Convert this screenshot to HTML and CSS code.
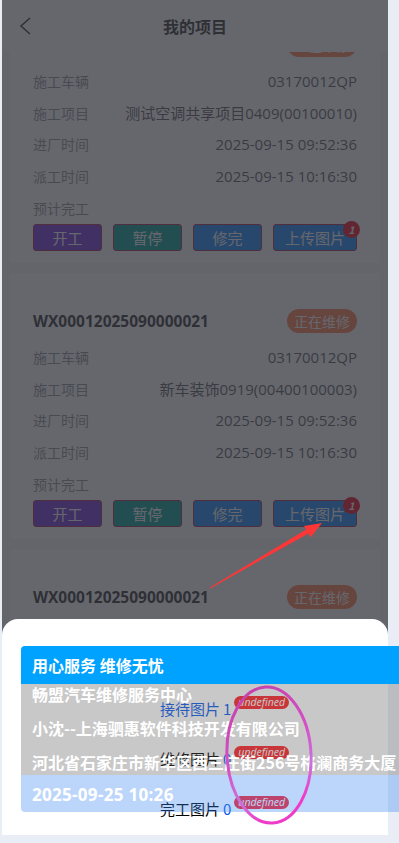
FILE: index.html
```html
<!DOCTYPE html>
<html lang="zh-CN">
<head>
<meta charset="UTF-8" />
<meta name="viewport" content="width=device-width, initial-scale=1" />
<title>我的项目</title>
<link rel="stylesheet" href="styles.css">
</head>
<body>
  <div class="app">
    <div class="nav">
      <span class="nav-back">
        <svg viewBox="0 0 12 18" aria-hidden="true"><polyline points="11,1 2,9 11,17" /></svg>
      </span>
      <div class="nav-title">我的项目</div>
      <span></span>
    </div>

    <div class="list">
      <div class="list-inner">
        <div class="card">
          <div class="card-head">
            <div class="card-no">WX00012025090000020</div>
            <span class="status">正在维修</span>
          </div>
          <div class="rows">
            <div class="row"><span class="label">施工车辆</span><span class="value">03170012QP</span></div>
            <div class="row"><span class="label">施工项目</span><span class="value">测试空调共享项目0409(00100010)</span></div>
            <div class="row"><span class="label">进厂时间</span><span class="value">2025-09-15 09:52:36</span></div>
            <div class="row"><span class="label">派工时间</span><span class="value">2025-09-15 10:16:30</span></div>
            <div class="row"><span class="label">预计完工</span><span class="value"></span></div>
          </div>
          <div class="actions">
            <button class="btn btn-start">开工</button>
            <button class="btn btn-pause">暂停</button>
            <button class="btn btn-done">修完</button>
            <button class="btn btn-upload">上传图片<span class="dot">1</span></button>
          </div>
        </div>

        <div class="card">
          <div class="card-head">
            <div class="card-no">WX00012025090000021</div>
            <span class="status">正在维修</span>
          </div>
          <div class="rows">
            <div class="row"><span class="label">施工车辆</span><span class="value">03170012QP</span></div>
            <div class="row"><span class="label">施工项目</span><span class="value">新车装饰0919(00400100003)</span></div>
            <div class="row"><span class="label">进厂时间</span><span class="value">2025-09-15 09:52:36</span></div>
            <div class="row"><span class="label">派工时间</span><span class="value">2025-09-15 10:16:30</span></div>
            <div class="row"><span class="label">预计完工</span><span class="value"></span></div>
          </div>
          <div class="actions">
            <button class="btn btn-start">开工</button>
            <button class="btn btn-pause">暂停</button>
            <button class="btn btn-done">修完</button>
            <button class="btn btn-upload">上传图片<span class="dot">1</span></button>
          </div>
        </div>

        <div class="card">
          <div class="card-head">
            <div class="card-no">WX00012025090000021</div>
            <span class="status">正在维修</span>
          </div>
          <div class="rows">
            <div class="row"><span class="label">施工车辆</span><span class="value">03170012QP</span></div>
            <div class="row"><span class="label">施工项目</span><span class="value">新车装饰0919(00400100003)</span></div>
          </div>
        </div>
      </div>
    </div>

    <div class="mask"></div>

    <div class="sheet">
      <div class="pic-row link"><span class="pic-name">接待图片</span><span class="pic-count">1</span><span class="tag">undefined</span></div>
      <div class="pic-row"><span class="pic-name">维修图片</span><span class="pic-count">0</span><span class="tag">undefined</span></div>
      <div class="pic-row"><span class="pic-name">完工图片</span><span class="pic-count">0</span><span class="tag">undefined</span></div>

      <div class="watermark">
        <div class="wm-title">用心服务 维修无忧</div>
        <div class="wm-info">
          <div class="wm-line">畅盟汽车维修服务中心</div>
          <div class="wm-line">小沈--上海驷惠软件科技开发有限公司</div>
          <div class="wm-line">河北省石家庄市新华区西三庄街256号格澜商务大厦</div>
        </div>
        <div class="wm-time">2025-09-25 10:26</div>
      </div>
    </div>
  </div>

  <svg class="marks" viewBox="0 0 399 843" aria-hidden="true">
    <defs>
      <linearGradient id="ring" x1="0" y1="0" x2="0.3" y2="1">
        <stop offset="0" stop-color="#c23fa6" />
        <stop offset="0.55" stop-color="#d64fc8" />
        <stop offset="0.8" stop-color="#c874dc" />
        <stop offset="1" stop-color="#ee3cc8" />
      </linearGradient>
    </defs>
    <polygon class="arrow" points="210.2,588.4 308.4,533.4 310.6,537.2 322,523 304,525.9 306.2,529.6 209.8,587.6" />
    <ellipse class="ring" cx="269" cy="755" rx="42" ry="68" transform="rotate(-3 269 755)" />
  </svg>
</body>
</html>
```

FILE: styles.css
```css
html, body {
  margin: 0;
  height: 100%;
  overflow: hidden;
}
body {
  background: #e9edf5;
  font-family: "Open Sans", "Noto Sans CJK SC", sans-serif;
  color: #303133;
  position: relative;
}
.app {
  position: relative;
  width: 386px;
  height: 835px;
  margin-left: 2px;
  background: #f5f6f8;
  display: flex;
  flex-direction: column;
}

/* top bar */
.nav {
  flex: none;
  height: 52px;
  background: #fff;
  display: grid;
  grid-template-columns: 40px 1fr 40px;
  align-items: center;
  position: relative;
  z-index: 1;
}
.nav-back {
  display: flex;
  padding-left: 17px;
}
.nav-back svg {
  width: 12px;
  height: 18px;
  fill: none;
  stroke: #303133;
  stroke-width: 1.5;
}
.nav-title {
  text-align: center;
  font-size: 16px;
  font-weight: 700;
  font-family: "Noto Sans CJK SC", sans-serif;
}

/* list */
.list {
  flex: 1;
  min-height: 0;
  overflow: hidden;
}
.list-inner {
  margin-top: -55px;
}
.card {
  background: #fff;
  margin: 0 8px 10px;
  padding: 36px 23px 12px;
}
.card-head {
  height: 24px;
  display: flex;
  align-items: center;
  justify-content: space-between;
}
.card-no {
  font-size: 15.5px;
  font-weight: 700;
  color: #303133;
}
.status {
  height: 24px;
  line-height: 24px;
  padding: 0 7px;
  border-radius: 12px;
  background: #ff7f50;
  color: #fff;
  font-size: 14px;
  font-family: "Noto Sans CJK SC", sans-serif;
}
.rows {
  margin-top: 8px;
}
.row {
  height: 31.8px;
  display: flex;
  align-items: center;
  justify-content: space-between;
}
.label {
  font-size: 14px;
  color: #909399;
  font-family: "Noto Sans CJK SC", sans-serif;
}
.value {
  font-size: 15px;
  color: #5a5c60;
}
.actions {
  display: flex;
  gap: 11px;
}
.btn {
  position: relative;
  flex: 0 0 69px;
  height: 27px;
  padding: 0;
  border: 1px solid #a8304e;
  border-radius: 3px;
  color: #fff;
  font-size: 15px;
  font-family: "Noto Sans CJK SC", sans-serif;
}
.btn-start { background: #7232dd; }
.btn-pause { background: #00a39a; }
.btn-done { background: #1989fa; }
.btn-upload {
  flex: 1;
  background: #1989fa;
}
.dot {
  position: absolute;
  top: -4px;
  right: -4px;
  width: 17px;
  height: 17px;
  line-height: 17px;
  border-radius: 50%;
  background: #ee0a24;
  color: #fff;
  font-size: 10px;
  font-style: italic;
  font-weight: 700;
  text-align: center;
}

/* popup */
.mask {
  position: absolute;
  inset: 0;
  z-index: 2;
  background: rgba(47, 48, 56, 0.734);
}
.sheet {
  position: absolute;
  left: 0;
  right: 0;
  bottom: 0;
  z-index: 3;
  height: 216px;
  box-sizing: border-box;
  padding: 64px 0 0 158px;
  background: #fff;
  border-radius: 16px 16px 0 0;
}
.pic-row {
  height: 50px;
  display: flex;
  align-items: center;
  font-size: 15px;
  font-family: "Noto Sans CJK SC", sans-serif;
  color: #000;
}
.pic-count {
  margin-left: 3px;
  color: #0b5bef;
}
.link .pic-name {
  color: #0b5bef;
}
.tag {
  margin: 0 0 12px 3px;
  height: 13px;
  line-height: 13px;
  padding: 0 4px;
  border-radius: 7px;
  background: #ff1f24;
  color: #fff;
  font-size: 10.5px;
  font-style: italic;
  font-family: "Open Sans", sans-serif;
}
.watermark {
  position: absolute;
  top: 27px;
  left: 19px;
  width: max-content;
  border-radius: 4px;
  overflow: hidden;
  color: #fff;
  font-size: 16px;
  font-weight: 700;
  font-family: "Noto Sans CJK SC", sans-serif;
}
.wm-title {
  height: 38px;
  line-height: 38px;
  padding: 0 11px;
  background: #00a2ff;
}
.wm-info {
  display: flex;
  flex-direction: column;
  gap: 14px;
  padding: 0 11px 3px;
  background: rgba(98, 98, 98, 0.35);
}
.wm-line {
  line-height: 20px;
}
.wm-time {
  line-height: 20px;
  padding: 10px 11px 7px;
  font-family: "Open Sans", sans-serif;
  font-size: 17px;
  letter-spacing: 0.3px;
  background: rgba(64, 138, 243, 0.35);
}

/* annotations */
.marks {
  position: absolute;
  top: 0;
  left: 0;
  z-index: 4;
  width: 399px;
  height: 843px;
  pointer-events: none;
}
.arrow {
  fill: #ff3636;
}
.ring {
  fill: none;
  stroke: url(#ring);
  stroke-width: 3;
}
```
